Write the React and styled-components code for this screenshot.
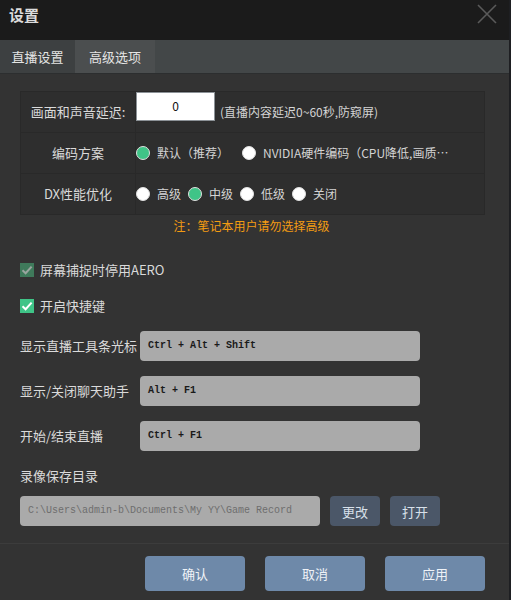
import React from "react";
import styled, { createGlobalStyle } from "styled-components";

const GlobalStyle = createGlobalStyle`
  html, body {
    margin: 0;
    padding: 0;
    background: #1e1f22;
  }
  body {
    font-family: "Noto Sans CJK SC", "Noto Sans", sans-serif;
    font-size: 12px;
    line-height: 16px;
  }
`;

const Dialog = styled.div`
  width: 509px;
  height: 600px;
  background: #333333;
  display: flex;
  flex-direction: column;
  color: #d8d8d8;
`;

const TitleBar = styled.div`
  height: 40px;
  background: #1b1b1b;
  display: flex;
  align-items: flex-start;
  justify-content: space-between;
  padding: 0 12px 0 9px;
`;

const Title = styled.span`
  margin-top: 7px;
  font-size: 15px;
  font-weight: bold;
  color: #dcdcdc;
`;

const Close = styled.svg`
  margin-top: 4px;
  width: 20px;
  height: 20px;
`;

const Tabs = styled.div`
  height: 33px;
  background: #434748;
  border-bottom: 1px solid #2c2e2f;
  display: flex;
`;

const Tab = styled.div`
  width: ${({ w }) => w}px;
  background: ${({ active }) => (active ? "#4b4e4f" : "#3d4041")};
  color: #e4e4e4;
  font-size: 13px;
  display: flex;
  align-items: center;
  justify-content: center;
`;

const Body = styled.div`
  flex: 1;
  padding: 17px 25px 0 20px;
  display: flex;
  flex-direction: column;
`;

const Table = styled.div`
  width: 463px;
  display: grid;
  grid-template-columns: 115px 1fr;
  grid-auto-rows: 41px;
  background: #2e2e2e;
  border: 1px solid #292929;
  border-bottom: none;
`;

const LabelCell = styled.div`
  display: flex;
  align-items: center;
  justify-content: center;
  border-right: 1px solid #292929;
  border-bottom: 1px solid #292929;
  color: #dadada;
  font-size: 13px;
`;

const ValueCell = styled.div`
  display: flex;
  align-items: center;
  border-bottom: 1px solid #292929;
  color: #d4d4d4;
  font-size: 12px;
  white-space: nowrap;
  overflow: hidden;
`;

const DelayInput = styled.div`
  width: 77px;
  height: 27px;
  margin-top: -12px;
  background: #ffffff;
  border: 1px solid #8c9297;
  color: #111;
  display: flex;
  align-items: center;
  justify-content: center;
  font-size: 12px;
  margin-right: 5px;
`;

const Radio = styled.span`
  width: 12px;
  height: 12px;
  border-radius: 50%;
  border: 1px solid #e0e0e0;
  background: ${({ checked }) => (checked ? "#3fc487" : "#ffffff")};
  margin-right: 7px;
  flex-shrink: 0;
`;

const Option = styled.span`
  display: flex;
  align-items: center;
  margin-right: ${({ gap }) => gap}px;
`;

const Note = styled.div`
  margin-top: 3px;
  color: #f39c12;
  font-size: 12px;
  text-align: center;
  width: 463px;
`;

const CheckRow = styled.label`
  display: flex;
  align-items: center;
  height: 16px;
  margin-top: ${({ top }) => top}px;
  font-size: 13px;
  color: #dadada;
`;

const Box = styled.span`
  width: 14px;
  height: 14px;
  background: ${({ disabled }) => (disabled ? "#3f7a5b" : "#3fc487")};
  margin-right: 6px;
  display: flex;
  align-items: center;
  justify-content: center;
`;

const KeyRow = styled.div`
  display: flex;
  align-items: center;
  height: 30px;
  margin-top: ${({ top }) => top}px;
`;

const KeyLabel = styled.span`
  width: 120px;
  font-size: 13px;
  color: #dadada;
`;

const Field = styled.div`
  width: ${({ w }) => w}px;
  height: 30px;
  background: #aaaaaa;
  border-radius: 4px;
  display: flex;
  align-items: center;
  padding-left: ${({ pad }) => pad}px;
  box-sizing: border-box;
  font-family: "Liberation Mono", "Courier New", monospace;
  font-size: 10px;
  font-weight: ${({ muted }) => (muted ? "normal" : "bold")};
  color: ${({ muted }) => (muted ? "#6e6e6e" : "#1a1a1a")};
`;

const PlainLabel = styled.div`
  margin-top: 17px;
  font-size: 13px;
  color: #dadada;
`;

const PathRow = styled.div`
  display: flex;
  align-items: center;
  gap: 10px;
  margin-top: 12px;
`;

const SmallButton = styled.button`
  width: 50px;
  height: 30px;
  border: none;
  border-radius: 4px;
  background: #4b5768;
  color: #d8e0ea;
  font-family: inherit;
  font-size: 13px;
  padding: 0;
`;

const Footer = styled.div`
  border-top: 1px solid #3c3c3c;
  height: 57px;
  display: flex;
  justify-content: flex-end;
  gap: 20px;
  padding: 12px 24px 0 0;
  box-sizing: border-box;
`;

const FooterButton = styled.button`
  width: 100px;
  height: 35px;
  border: none;
  border-radius: 4px;
  background: #6e89a9;
  color: #eef2f7;
  font-family: inherit;
  font-size: 13px;
  padding: 0;
`;

const Check = ({ color }) => (
  <svg width="12" height="12" viewBox="0 0 12 12">
    <path d="M1.5 6.2 L4.6 9.2 L10.6 2.6" fill="none" stroke={color} strokeWidth="2" />
  </svg>
);

export default function App() {
  return (
    <>
      <GlobalStyle />
      <Dialog>
        <TitleBar>
          <Title>设置</Title>
          <Close viewBox="0 0 20 20">
            <path d="M1 1 L19 19 M19 1 L1 19" stroke="#5a5a5a" strokeWidth="1.6" />
          </Close>
        </TitleBar>
        <Tabs>
          <Tab w={75}>直播设置</Tab>
          <Tab w={80} active>
            高级选项
          </Tab>
        </Tabs>
        <Body>
          <Table>
            <LabelCell>画面和声音延迟:</LabelCell>
            <ValueCell>
              <DelayInput>0</DelayInput>
              (直播内容延迟0~60秒,防窥屏)
            </ValueCell>
            <LabelCell>编码方案</LabelCell>
            <ValueCell>
              <Option gap={13}>
                <Radio checked />
                默认（推荐）
              </Option>
              <Option gap={0}>
                <Radio />
                NVIDIA硬件编码（CPU降低,画质…
              </Option>
            </ValueCell>
            <LabelCell>DX性能优化</LabelCell>
            <ValueCell>
              <Option gap={7}>
                <Radio />
                高级
              </Option>
              <Option gap={7}>
                <Radio checked />
                中级
              </Option>
              <Option gap={7}>
                <Radio />
                低级
              </Option>
              <Option gap={0}>
                <Radio />
                关闭
              </Option>
            </ValueCell>
          </Table>
          <Note>注：笔记本用户请勿选择高级</Note>
          <CheckRow top={28}>
            <Box disabled>
              <Check color="#9aa59f" />
            </Box>
            屏幕捕捉时停用AERO
          </CheckRow>
          <CheckRow top={20}>
            <Box>
              <Check color="#ffffff" />
            </Box>
            开启快捷键
          </CheckRow>
          <KeyRow top={17}>
            <KeyLabel>显示直播工具条光标</KeyLabel>
            <Field w={280} pad={8}>
              Ctrl + Alt + Shift
            </Field>
          </KeyRow>
          <KeyRow top={15}>
            <KeyLabel>显示/关闭聊天助手</KeyLabel>
            <Field w={280} pad={8}>
              Alt + F1
            </Field>
          </KeyRow>
          <KeyRow top={15}>
            <KeyLabel>开始/结束直播</KeyLabel>
            <Field w={280} pad={8}>
              Ctrl + F1
            </Field>
          </KeyRow>
          <PlainLabel>录像保存目录</PlainLabel>
          <PathRow>
            <Field w={300} pad={8} muted>
              C:\Users\admin-b\Documents\My YY\Game Record
            </Field>
            <SmallButton>更改</SmallButton>
            <SmallButton>打开</SmallButton>
          </PathRow>
        </Body>
        <Footer>
          <FooterButton>确认</FooterButton>
          <FooterButton>取消</FooterButton>
          <FooterButton>应用</FooterButton>
        </Footer>
      </Dialog>
    </>
  );
}
